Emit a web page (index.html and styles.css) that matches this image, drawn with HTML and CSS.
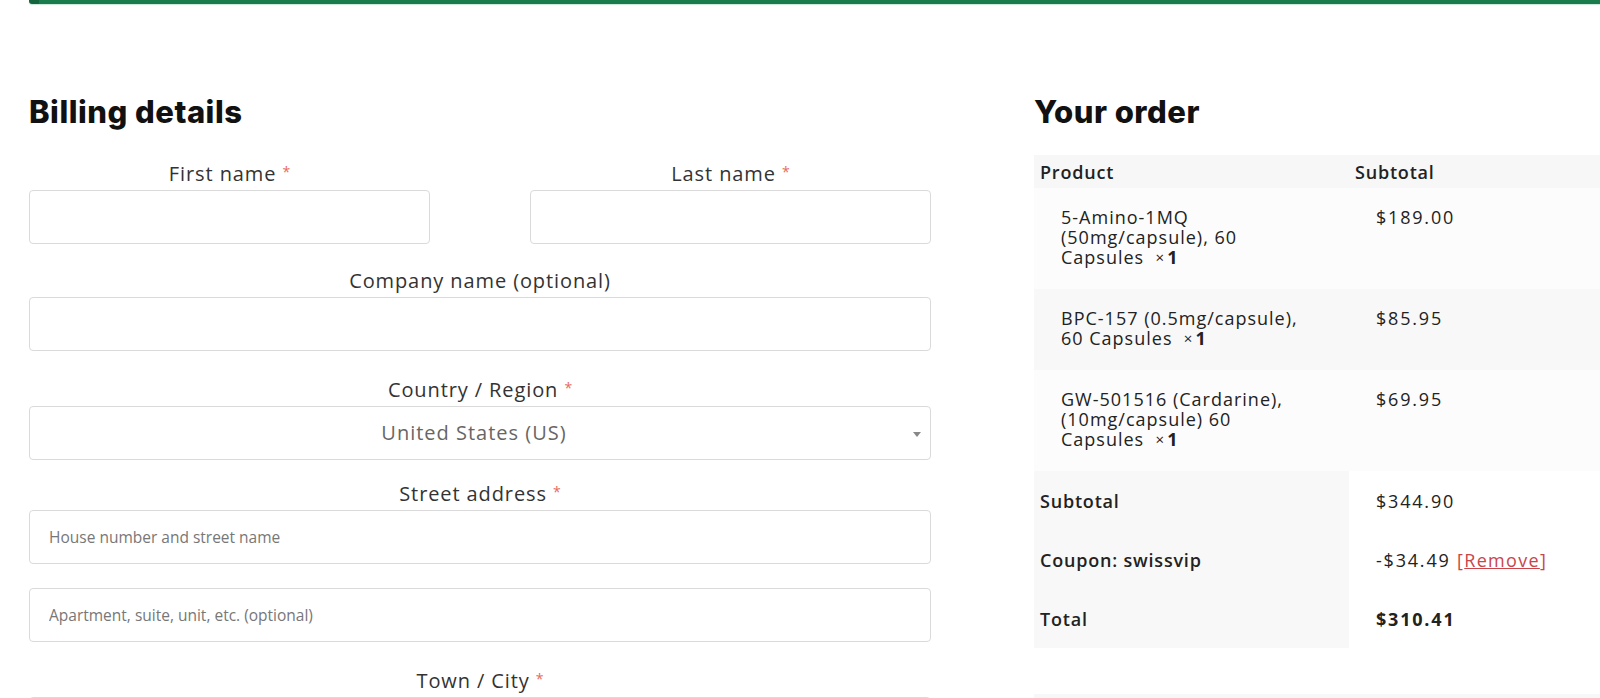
FILE: index.html
```html
<!DOCTYPE html>
<html lang="en">
<head>
    <meta charset="UTF-8">
    <meta name="viewport" content="width=device-width, initial-scale=1.0">
    <title>Checkout</title>
    <link rel="stylesheet" href="styles.css">
</head>
<body>

    <!-- Unterkante der Erfolgsmeldung -->
    <div class="notice-edge"></div>

    <div id="checkout">
        <div class="billing">
            <h3 class="section-title billing-title">Billing details</h3>

            <div class="form-row-pair">
                <div class="form-row">
                    <label>First name <abbr class="required">*</abbr></label>
                    <input type="text" class="input-text">
                </div>
                <div class="form-row">
                    <label>Last name <abbr class="required">*</abbr></label>
                    <input type="text" class="input-text">
                </div>
            </div>

            <div class="form-row">
                <label>Company name (optional)</label>
                <input type="text" class="input-text">
            </div>

            <div class="form-row country-row">
                <label>Country / Region <abbr class="required">*</abbr></label>
                <span class="select-box">
                    United States (US)
                    <span class="select-arrow"></span>
                </span>
            </div>

            <div class="form-row">
                <label>Street address <abbr class="required">*</abbr></label>
                <input type="text" class="input-text" placeholder="House number and street name">
                <input type="text" class="input-text second-line" placeholder="Apartment, suite, unit, etc. (optional)">
            </div>

            <div class="form-row">
                <label>Town / City <abbr class="required">*</abbr></label>
                <input type="text" class="input-text">
            </div>
        </div>

        <div class="order">
            <h3 class="section-title order-title">Your order</h3>

            <table class="order-table">
                <thead>
                    <tr>
                        <th class="product-name">Product</th>
                        <th class="product-total">Subtotal</th>
                    </tr>
                </thead>
                <tbody>
                    <tr class="cart-item">
                        <td class="product-name">
                            <span class="line">5-Amino-1MQ</span>
                            <span class="line">(50mg/capsule), 60</span>
                            <span class="line">Capsules&nbsp; <span class="qty">&times;</span><strong class="qty-num">1</strong></span>
                        </td>
                        <td class="product-total">$189.00</td>
                    </tr>
                    <tr class="cart-item alt">
                        <td class="product-name">
                            <span class="line">BPC-157 (0.5mg/capsule),</span>
                            <span class="line">60 Capsules&nbsp; <span class="qty">&times;</span><strong class="qty-num">1</strong></span>
                        </td>
                        <td class="product-total">$85.95</td>
                    </tr>
                    <tr class="cart-item">
                        <td class="product-name">
                            <span class="line">GW-501516 (Cardarine),</span>
                            <span class="line">(10mg/capsule) 60</span>
                            <span class="line">Capsules&nbsp; <span class="qty">&times;</span><strong class="qty-num">1</strong></span>
                        </td>
                        <td class="product-total">$69.95</td>
                    </tr>
                </tbody>
                <tfoot>
                    <tr>
                        <th>Subtotal</th>
                        <td>$344.90</td>
                    </tr>
                    <tr>
                        <th>Coupon: swissvip</th>
                        <td>-$34.49 <span class="remove">[<a href="#">Remove</a>]</span></td>
                    </tr>
                    <tr class="order-total">
                        <th>Total</th>
                        <td><strong>$310.41</strong></td>
                    </tr>
                </tfoot>
            </table>

            <div class="payment"></div>
        </div>
    </div>

</body>
</html>
```

FILE: styles.css
```css
/* Grundlegende Styles */
body {
    margin: 0;
    font-family: "Open Sans", "Liberation Sans", sans-serif;
    color: #222;
    background-color: #fff;
    overflow: hidden;
}

/* Grüner Rand der Meldung oben */
.notice-edge {
    margin-left: 29px;
    height: 4px;
    background-color: #1a7b4d;
    border-left: 10px solid #14643e;
    border-bottom-left-radius: 3px;
    box-shadow: 0 1px 1px rgba(40, 160, 100, 0.25);
}

#checkout {
    display: grid;
    grid-template-columns: 902px 566px;
    column-gap: 103px;
    margin-left: 29px;
    padding-top: 89px;
}

.section-title {
    font-family: Inter, "Liberation Sans", sans-serif;
    font-weight: 800;
    font-size: 31px;
    line-height: 38px;
    letter-spacing: 0.5px;
    color: #111;
    margin: 0;
}

.billing-title {
    margin-bottom: 28px;
}

.order-title {
    margin-bottom: 24px;
}

/* Formularzeilen */
.form-row-pair {
    display: grid;
    grid-template-columns: 401px 401px;
    justify-content: space-between;
}

.form-row {
    margin-bottom: 24px;
}

.country-row {
    margin-bottom: 19px;
}

.form-row label {
    display: block;
    text-align: center;
    font-size: 20px;
    line-height: 26px;
    letter-spacing: 0.9px;
    color: #333;
    margin-bottom: 3px;
}

abbr.required {
    text-decoration: none;
    color: #e66a5e;
    font-size: 14px;
    vertical-align: 4px;
    letter-spacing: 0;
}

.input-text,
.select-box {
    display: block;
    box-sizing: border-box;
    width: 100%;
    height: 54px;
    border: 1px solid #dadada;
    border-radius: 4px;
    background-color: #fff;
    font-family: "Open Sans", sans-serif;
    font-size: 15.5px;
    padding: 0 19px;
    margin: 0;
    outline: none;
}

.input-text::placeholder {
    color: #777;
}

.second-line {
    margin-top: 24px;
}

.select-box {
    position: relative;
    text-align: center;
    font-size: 20px;
    line-height: 52px;
    letter-spacing: 1px;
    color: #666;
    padding: 0 20px 0 8px;
}

.select-arrow {
    position: absolute;
    right: 9px;
    top: 25px;
    width: 0;
    height: 0;
    border-left: 4px solid transparent;
    border-right: 4px solid transparent;
    border-top: 5px solid #888;
}

/* Bestellübersicht */
.order-table {
    width: 566px;
    border-collapse: collapse;
    font-size: 18px;
    letter-spacing: 1px;
    color: #222;
}

.order-table thead th {
    text-align: left;
    background-color: #f7f7f7;
    font-weight: 600;
    height: 33px;
    padding: 0 6px;
    letter-spacing: 0.8px;
}

.order-table th.product-name {
    width: 303px;
}

.cart-item td {
    background-color: #fcfcfc;
    line-height: 20px;
    vertical-align: top;
    padding: 19px 27px 22px;
}

.cart-item .line {
    display: block;
    height: 20px;
    white-space: nowrap;
}

.cart-item td.product-total,
.order-table tfoot td {
    letter-spacing: 1.8px;
}

.cart-item.alt td {
    background-color: #f8f8f8;
}

.qty,
.qty-num {
    display: inline-block;
    height: 20px;
    line-height: 20px;
    vertical-align: top;
}

.qty {
    font-size: 15px;
    margin-right: 2px;
}

.order-table tfoot th {
    text-align: left;
    background-color: #f8f8f8;
    font-weight: 600;
    height: 59px;
    padding: 0 6px;
    letter-spacing: 0.8px;
}

.order-table tfoot td {
    padding: 0 27px;
}

.remove,
.remove a {
    color: #c9454a;
    letter-spacing: 1.3px;
}

.payment {
    margin-top: 46px;
    height: 80px;
    background-color: #f7f7f7;
}
```
